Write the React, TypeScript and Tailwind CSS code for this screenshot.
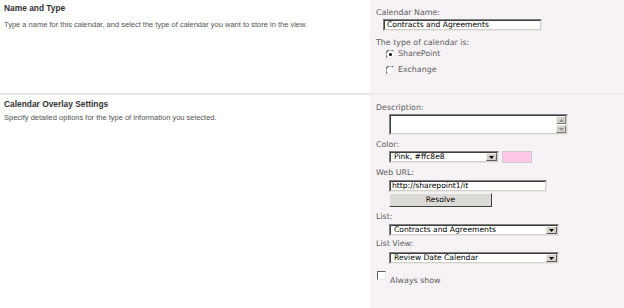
import React from "react";

const lbl = "text-[7.9px] text-[#606060] leading-[10px] [font-family:'DejaVu_Sans',sans-serif]";
const inputText = "text-[7.6px] text-black [font-family:'DejaVu_Sans',sans-serif]";
const title = "text-[8.4px] font-bold text-[#333] leading-[10px] [font-family:'Liberation_Sans',sans-serif]";
const desc = "text-[7.5px] text-[#555] leading-[10px] [font-family:'Liberation_Sans',sans-serif]";

function Sunken({ className, children }: { className: string; children?: React.ReactNode }) {
  return (
    <div className={`border border-t-[#808080] border-l-[#808080] border-b-[#e8e8e8] border-r-[#e8e8e8] ${className}`}>
      <div className="h-full w-full border border-t-[#404040] border-l-[#404040] border-b-[#d4d0c8] border-r-[#d4d0c8] bg-white flex items-center">
        {children}
      </div>
    </div>
  );
}

function DropBtn() {
  return (
    <div className="w-[11px] h-full border border-t-[#f0f0f0] border-l-[#f0f0f0] border-b-[#606060] border-r-[#606060] bg-[#d4d0c8] flex items-center justify-center">
      <svg width="5" height="3" viewBox="0 0 5 3"><path d="M0 0h5L2.5 3z" fill="#000" /></svg>
    </div>
  );
}

function Select({ w, text }: { w: string; text: string }) {
  return (
    <Sunken className={`${w} h-[12px]`}>
      <span className={`${inputText} flex-1 pl-[3px] leading-[10px] whitespace-nowrap overflow-hidden`}>{text}</span>
      <DropBtn />
    </Sunken>
  );
}

function Radio({ checked }: { checked?: boolean }) {
  return (
    <svg width="9" height="9" viewBox="0 0 9 9">
      <circle cx="4.5" cy="4.5" r="4" fill="#fff" />
      <path d="M1.2 7.3A4 4 0 0 1 7.3 1.2" stroke="#606060" strokeWidth="1.2" fill="none" />
      <path d="M7.6 1.6A4 4 0 0 1 1.6 7.6" stroke="#e0e0e0" strokeWidth="1" fill="none" />
      {checked && <circle cx="4.5" cy="4.5" r="1.5" fill="#000" />}
    </svg>
  );
}

export default function App() {
  return (
    <div className="w-[624px] h-[308px] bg-white overflow-hidden flex flex-col">
      {/* Section 1 */}
      <div className="flex h-[93px]">
        <div className="w-[370px] pl-[4px] pt-[3px]">
          <div className={title}>Name and Type</div>
          <div className={`${desc} mt-[7px]`}>
            Type a name for this calendar, and select the type of calendar you want to store in the view.
          </div>
        </div>
        <div className="flex-1 bg-[#f6f2f6] pl-[6px] pt-[8px]">
          <div className={lbl}>Calendar Name:</div>
          <Sunken className="ml-[7px] mt-[1px] w-[159px] h-[12px]">
            <span className={`${inputText} pl-[2px] leading-[10px]`}>Contracts and Agreements</span>
          </Sunken>
          <div className={`${lbl} mt-[7px]`}>The type of calendar is:</div>
          <div className="ml-[10px] mt-[1px] flex items-center gap-[3px] h-[10px]">
            <Radio checked />
            <span className={lbl}>SharePoint</span>
          </div>
          <div className="ml-[10px] mt-[6px] flex items-center gap-[3px] h-[10px]">
            <Radio />
            <span className={lbl}>Exchange</span>
          </div>
        </div>
      </div>
      <div className="h-[2px] bg-[#ececec] flex">
        <div className="w-[370px] h-[1px] bg-[#e2e2e2]" />
      </div>
      {/* Section 2 */}
      <div className="flex flex-1">
        <div className="w-[370px] pl-[4px] pt-[4px]">
          <div className={title}>Calendar Overlay Settings</div>
          <div className={`${desc} mt-[4px]`}>
            Specify detailed options for the type of information you selected.
          </div>
        </div>
        <div className="flex-1 bg-[#f6f2f6] pl-[6px] pt-[8px]">
          <div className={lbl}>Description:</div>
          <div className="ml-[13px] mt-[1px] w-[179px] h-[21px] border border-t-[#808080] border-l-[#808080] border-b-[#e8e8e8] border-r-[#e8e8e8]">
            <div className="h-full w-full border border-t-[#404040] border-l-[#404040] border-b-[#d4d0c8] border-r-[#d4d0c8] bg-white flex justify-end">
              <div className="w-[10px] flex flex-col justify-between">
                <div className="h-[8px] bg-[#d4d0c8] border border-t-[#f0f0f0] border-l-[#f0f0f0] border-b-[#808080] border-r-[#808080] flex items-center justify-center">
                  <svg width="5" height="3" viewBox="0 0 5 3"><path d="M0 3h5L2.5 0z" fill="#909090" /></svg>
                </div>
                <div className="h-[8px] bg-[#d4d0c8] border border-t-[#f0f0f0] border-l-[#f0f0f0] border-b-[#808080] border-r-[#808080] flex items-center justify-center">
                  <svg width="5" height="3" viewBox="0 0 5 3"><path d="M0 0h5L2.5 3z" fill="#909090" /></svg>
                </div>
              </div>
            </div>
          </div>
          <div className={`${lbl} mt-[5px]`}>Color:</div>
          <div className="ml-[13px] mt-[1px] flex items-center gap-[3px]">
            <Select w="w-[110px]" text="Pink, #ffc8e8" />
            <div className="w-[30px] h-[12px] bg-[#ffc8e8] border border-[#d0c8d0]" />
          </div>
          <div className={`${lbl} mt-[5px]`}>Web URL:</div>
          <Sunken className="ml-[13px] mt-[2px] w-[158px] h-[12px]">
            <span className={`${inputText} pl-[1px] leading-[10px]`}>http://sharepoint1/it</span>
          </Sunken>
          <div className="ml-[13px] mt-[1px] w-[103px] h-[14px] bg-[#dcdad6] border border-t-[#f4f4f4] border-l-[#f4f4f4] border-b-[#404040] border-r-[#404040] flex items-center justify-center">
            <span className={`${inputText} leading-[10px] text-[#222]`}>Resolve</span>
          </div>
          <div className={`${lbl} mt-[5px]`}>List:</div>
          <div className="ml-[13px] mt-[2px]">
            <Select w="w-[170px]" text="Contracts and Agreements" />
          </div>
          <div className={`${lbl} mt-[3px]`}>List View:</div>
          <div className="ml-[13px] mt-[3px]">
            <Select w="w-[170px]" text="Review Date Calendar" />
          </div>
          <div className="ml-[1px] mt-[7px] flex items-start">
            <div className="w-[9px] h-[9px] bg-white border border-t-[#606060] border-l-[#606060] border-b-[#e8e8e8] border-r-[#e8e8e8]" />
            <span className={`${lbl} ml-[4px] mt-[5px]`}>Always show</span>
          </div>
        </div>
      </div>
    </div>
  );
}
